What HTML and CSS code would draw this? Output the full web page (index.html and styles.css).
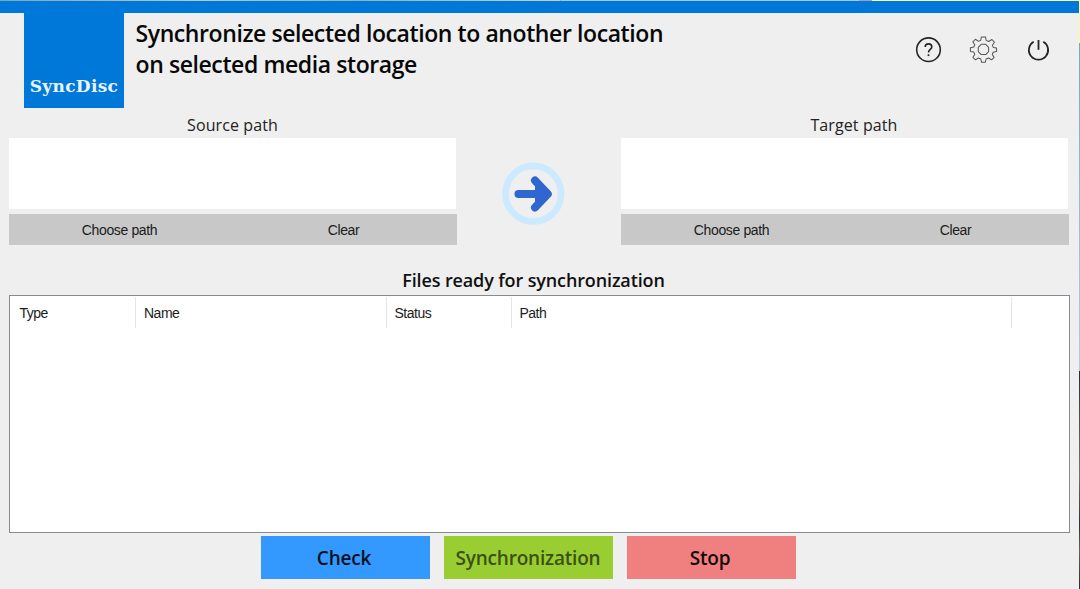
FILE: index.html
```
<!DOCTYPE html>
<html lang="en">
<head>
<meta charset="utf-8">
<title>SyncDisc</title>
<link rel="stylesheet" href="styles.css">
</head>
<body>
<div class="desktop">
  <main class="window">
    <header class="header">
      <div class="logo"><span class="logo-text">SyncDisc</span></div>
      <h1 class="title"><span class="title-first">Synchronize selected location to another location</span><br><span class="title-second">on selected media storage</span></h1>
      <nav class="tools">
        <svg class="tool" viewBox="0 0 30 30"><circle cx="14.5" cy="14.7" r="11.8" stroke-width="1.6"/><path d="M11.2 12C11.2 7.8 17.8 7.8 17.8 12C17.8 14.4 14.5 14.5 14.5 17.4" stroke-width="1.6"/><path d="M14.5 19.3v1.8" stroke-width="1.7"/></svg>
        <svg class="tool gear" viewBox="0.8 0.8 29.5 29.5"><path d="M13 2.7H17L17.7 6.1L20.2 7.2L23.3 5.2L25.8 7.9L23.8 10.8L24.7 13L27.9 13.6V17L24.6 17.7L23.7 19.9L25.5 22.8L23 25.2L20.1 23.4L17.6 24.4L16.9 27.6H13.2L12.4 24.4L10.1 23.4L7.2 25.2L4.6 22.7L6.5 19.9L5.5 17.6L2.2 17V13.3L5.5 12.6L6.5 10.4L4.6 7.6L7.1 5L10.1 7L12.3 6.1Z"/><path d="M12.8 10H17.2L20.1 12.9V17.1L17.2 20H12.8L9.9 17.1V12.9Z"/></svg>
        <svg class="tool" viewBox="0 0 30 30"><path d="M9.7 6.8A9.6 9.6 0 1 0 19.3 6.8" stroke-width="1.8"/><path d="M14.5 5v9.8" stroke-width="1.8"/></svg>
      </nav>
    </header>
    <section class="paths">
      <div class="path-panel">
        <label class="path-label"><span>Source path</span></label>
        <div class="path-box"></div>
        <div class="path-actions"><button class="path-button"><span>Choose path</span></button><button class="path-button"><span>Clear</span></button></div>
      </div>
      <svg class="arrow" viewBox="0 0 66 66"><circle class="ring" cx="33.3" cy="32.7" r="27.8"/><path class="arrow-head" d="M35 19.5L47.8 33L35 46.5"/><path class="arrow-head" d="M18.5 33H46"/><path class="arrow-fill" d="M35 24L45 33L35 42V33Z"/></svg>
      <div class="path-panel">
        <label class="path-label target"><span>Target path</span></label>
        <div class="path-box"></div>
        <div class="path-actions"><button class="path-button"><span>Choose path</span></button><button class="path-button"><span>Clear</span></button></div>
      </div>
    </section>
    <h2 class="list-title"><span>Files ready for synchronization</span></h2>
    <section class="list">
      <div class="list-head">
        <span class="cell first">Type</span><span class="cell">Name</span><span class="cell">Status</span><span class="cell">Path</span>
      </div>
    </section>
    <footer class="actions">
      <button class="action check"><span>Check</span></button>
      <button class="action sync"><span>Synchronization</span></button>
      <button class="action stop"><span>Stop</span></button>
    </footer>
  </main>
</div>
</body>
</html>
```
FILE: styles.css
```
* { box-sizing: border-box; }
body { margin: 0; overflow: hidden; }
button { border: 0; padding: 0; margin: 0; }
span { white-space: nowrap; }
.desktop {
  width: 1080px; height: 589px; padding: 1px 1px 0 0;
  background:
    linear-gradient(90deg, #7ba9b4 0, #b8c8bd 200px, #8fb4b5 360px, #c5cfbb 560px, #8aa3c8 560px, #a9c6f2 562px, #a9c6f2 859px, #a0a4a8 859px, #a0a4a8 872px, #fbfb9a 872px) 0 0 / 1080px 1px no-repeat,
    linear-gradient(180deg, #fbfb9a 0, #fbfb9a 43px, #79a9b5 43px, #a7bfcc 250px, #b9c8d8 371px, #252d36 371px, #353c40 390px, #5c6260 440px, #77736a 475px, #4b5051 500px, #28343a 525px, #686059 550px, #1e3035 589px) 1079px 0 / 1px 589px no-repeat;
}
.window {
  width: 1079px; height: 588px; background: #efefef;
  border-top: 12px solid #0078d9;
  font-family: "Open Sans", "Noto Sans", sans-serif; color: #111;
}
.header { height: 100px; padding-left: 24px; display: flex; }
.logo {
  width: 100px; height: 95px; background: #0078d9; color: #eaf4ff;
  display: flex; justify-content: center; padding-top: 61px;
  font: bold 17px/24px "DejaVu Serif", serif; letter-spacing: 0.3px;
}
.title { margin: 4.5px 0 0 11.5px; width: 600px; font-size: 23px; font-weight: 600; line-height: 31px; color: #080808; letter-spacing: -0.41px; }
.tools { margin: 21.5px 0 0 178px; display: flex; gap: 25px; }
.tool { width: 30px; height: 30px; fill: none; stroke: #242424; }
.gear { stroke: #555; stroke-width: 1; stroke-linejoin: round; }
.paths { height: 132px; padding-left: 9px; display: flex; }
.path-panel { width: 448px; }
.path-label { display: flex; justify-content: center; height: 25px; font-size: 16px; line-height: 24px; color: #222; letter-spacing: 0.1px; padding-right: 1px; }
.target { padding: 0 0 0 18px; }
.path-box { width: 447px; height: 71px; background: #fff; }
.path-actions { margin-top: 4.5px; height: 31.5px; display: grid; grid-template-columns: 1fr 1fr; background: #c8c8c8; }
.path-button { background: transparent; font: 14px/32px "Liberation Sans", Arial, sans-serif; letter-spacing: -0.37px; color: #1b1b1b; display: flex; justify-content: center; padding-right: 3px; }
.arrow { width: 66px; height: 66px; margin: 48px 55px 0 43px; fill: none; }
.ring { stroke: #cceaff; stroke-width: 6.6; }
.arrow-head { stroke: #2f66d0; stroke-width: 8; stroke-linecap: round; stroke-linejoin: round; }
.arrow-fill { fill: #2f66d0; }
.list-title { margin: 0; height: 50px; padding-top: 23px; text-align: center; font-size: 18px; line-height: 25px; font-weight: 600; padding-right: 12px; letter-spacing: -0.13px; }
.list { margin-left: 9px; width: 1061px; height: 237.5px; background: #fff; border: 1px solid #868a92; }
.list-head { display: grid; grid-template-columns: 126px 250.5px 125px 500px; padding-top: 1px; height: 32px; }
.cell { border-right: 1px solid #e5e5e5; font: 14px/32px "Liberation Sans", Arial, sans-serif; letter-spacing: -0.5px; color: #1b1b1b; padding-left: 8px; height: 31px; }
.first { padding-left: 9.5px; }
.actions { display: flex; gap: 14px; padding: 3.5px 0 0 260.5px; }
.action { width: 169px; height: 43px; font: 600 19px/44px "Open Sans", "Noto Sans", sans-serif; letter-spacing: -0.2px; padding-right: 2px; }
.check { background: #3399ff; color: #07111d; }
.sync { background: #9acd32; color: #3b5010; padding: 0; }
.stop { background: #f08080; color: #150909; }
```
